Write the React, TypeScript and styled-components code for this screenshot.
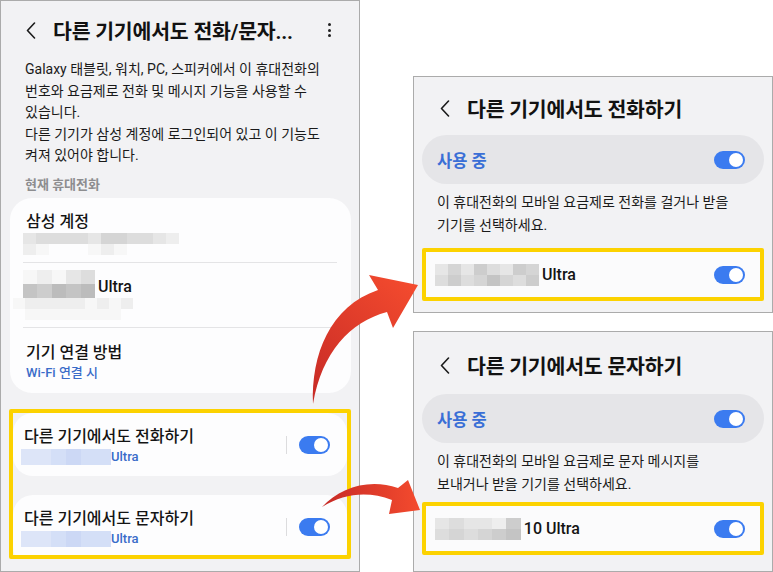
import React from "react";
import styled, { createGlobalStyle } from "styled-components";

const GlobalStyle = createGlobalStyle`
  html, body {
    margin: 0;
    padding: 0;
    background: #ffffff;
  }
  body {
    font-family: "Roboto", "Noto Sans CJK KR", sans-serif;
    color: #121212;
  }
  * {
    box-sizing: border-box;
  }
`;

const Canvas = styled.div`
  position: relative;
  width: 773px;
  height: 572px;
  display: flex;
  justify-content: space-between;
  overflow: hidden;
`;

const Screen = styled.div<{ $height: number }>`
  width: 360px;
  height: ${p => p.$height}px;
  background: #f2f2f4;
  border: 1px solid #ababab;
  padding: 0 8px;
  display: flex;
  flex-direction: column;
  flex: none;
`;

const SideColumn = styled.div`
  display: flex;
  flex-direction: column;
  gap: 18px;
  padding-top: 76px;
`;

const TopBar = styled.div<{ $height: number; $pad: number }>`
  height: ${p => p.$height}px;
  padding: ${p => p.$pad}px 0 0 ${p => p.$pad === 0 ? 17 : 18}px;
  display: flex;
  align-items: center;
  gap: 17px;
  flex: none;
`;

const Title = styled.h1`
  margin: 0;
  flex: 1;
  font-size: 20.5px;
  font-weight: 700;
  letter-spacing: -0.2px;
  white-space: nowrap;
`;

const MoreButton = styled.span`
  display: flex;
  flex-direction: column;
  gap: 2.5px;
  margin-right: 20px;

  &::before, &::after, & > i {
    content: "";
    display: block;
    width: 3px;
    height: 3px;
    border-radius: 50%;
    background: #222;
  }
`;

const Intro = styled.p`
  margin: 0;
  padding: 0 12px 0 16px;
  font-size: 14px;
  line-height: 21.5px;
  color: #1a1a1a;
  white-space: nowrap;
`;

const SectionLabel = styled.div`
  margin: 9px 0 4px;
  padding-left: 16px;
  font-size: 13px;
  line-height: 18px;
  font-weight: 700;
  color: #8d8d8f;
`;

const Card = styled.div`
  background: #fdfdfe;
  border-radius: 22px;
  padding: 0 14px 0 13px;
  margin-left: 1px;
`;

const ListItem = styled.div<{ $divider?: boolean; $top?: number }>`
  height: 65px;
  padding: ${p => p.$top ?? 13}px 0 0 3px;
  display: flex;
  flex-direction: column;
  border-bottom: ${p => p.$divider ? "1px solid #e4e4e6" : "none"};
`;

const ItemTitle = styled.div`
  font-size: 16px;
  line-height: 22px;
  font-weight: 500;
  color: #141414;
  display: flex;
  align-items: flex-end;
  gap: 3px;
  white-space: nowrap;
`;

const ItemSub = styled.div<{ $blue?: boolean }>`
  font-size: 13px;
  line-height: 18px;
  font-weight: 500;
  color: ${p => p.$blue ? "#3a6cc9" : "#555"};
  display: flex;
  align-items: center;
  margin-left: ${p => p.$blue ? 0 : -3}px;
`;

const Highlight = styled.div<{ $height: number }>`
  height: ${p => p.$height}px;
  border: 4px solid #fcd200;
  border-radius: 2px;
  overflow: hidden;
  display: flex;
  flex-direction: column;
  gap: 19px;
  flex: none;
`;

const SwitchCard = styled.div<{ $height: number }>`
  height: ${p => p.$height}px;
  background: #fdfdfe;
  border-radius: 20px;
  padding: 13px 17px 0 11px;
  display: flex;
  align-items: flex-start;
  flex: none;
`;

const SwitchText = styled.div`
  flex: 1;
  display: flex;
  flex-direction: column;
`;

const Rule = styled.span`
  width: 1px;
  height: 18px;
  margin: 10px 12px 0 0;
  background: #dcdcde;
`;

const Toggle = styled.span<{ $drop?: number }>`
  position: relative;
  width: 31px;
  height: 18px;
  margin-top: ${p => p.$drop ?? 0}px;
  border-radius: 9px;
  background: #3b7bf0;
  flex: none;

  &::after {
    content: "";
    position: absolute;
    top: 2px;
    right: 2px;
    width: 14px;
    height: 14px;
    border-radius: 50%;
    background: #ffffff;
  }
`;

const StatusPill = styled.div`
  height: 49px;
  border-radius: 25px;
  background: #e5e5e8;
  padding: 0 19px 0 15px;
  display: flex;
  align-items: center;
  justify-content: space-between;
  flex: none;
`;

const PillLabel = styled.span`
  font-size: 16.5px;
  font-weight: 700;
  color: #3a6fd6;
`;

const Hint = styled.p`
  margin: 7px 0 0;
  padding: 0 15px;
  font-size: 14px;
  line-height: 23px;
  color: #1a1a1a;
  white-space: nowrap;
`;

const DeviceRow = styled.div`
  height: 45px;
  background: #fbfbfc;
  padding: 0 15px 0 9px;
  display: flex;
  align-items: center;
  justify-content: space-between;
`;

const DeviceName = styled.span`
  display: flex;
  align-items: center;
  gap: 3px;
  font-size: 16px;
  font-weight: 500;
  color: #141414;
`;

const MosaicGrid = styled.span<{ $cols: number; $w: number; $h: number; $shift: number }>`
  display: grid;
  grid-template-columns: repeat(${p => p.$cols}, ${p => p.$w}px);
  grid-auto-rows: ${p => p.$h}px;
  margin-left: ${p => p.$shift}px;
  flex: none;
`;

const Cell = styled.span<{ $level: number; $tone: "gray" | "blue" }>`
  display: block;
  background: ${p =>
    p.$level === 0
      ? "transparent"
      : p.$tone === "blue"
        ? `hsl(222, 68%, ${98 - p.$level * 2}%)`
        : `hsl(0, 0%, ${100 - p.$level * 3.3}%)`};
`;

const ArrowLayer = styled.svg`
  position: absolute;
  left: 0;
  top: 0;
  pointer-events: none;
`;

function Mosaic({ rows, w, h, tone = "gray", shift = 0 }: {
  rows: string[];
  w: number;
  h: number;
  tone?: "gray" | "blue";
  shift?: number;
}) {
  return (
    <MosaicGrid $cols={rows[0].length} $w={w} $h={h} $shift={shift}>
      {rows.flatMap((row, i) =>
        [...row].map((c, j) => <Cell key={`${i}-${j}`} $tone={tone} $level={Number(c)} />)
      )}
    </MosaicGrid>
  );
}

function BackIcon() {
  return (
    <svg width="10" height="17" viewBox="0 0 10 17" fill="none">
      <path d="M8.5 1 L1.5 8.5 L8.5 16" stroke="#1a1a1a" strokeWidth="1.6" strokeLinecap="round" strokeLinejoin="round" />
    </svg>
  );
}

function SubScreen({ title, height, top, hintGap, hint, device }: {
  title: string;
  height: number;
  top: number;
  hintGap: number;
  hint: React.ReactNode;
  device: React.ReactNode;
}) {
  return (
    <Screen $height={height}>
      <TopBar $height={top} $pad={4}>
        <BackIcon />
        <Title>{title}</Title>
      </TopBar>
      <StatusPill>
        <PillLabel>사용 중</PillLabel>
        <Toggle />
      </StatusPill>
      <Hint>{hint}</Hint>
      <Highlight $height={53} style={{ marginTop: hintGap }}>
        <DeviceRow>
          {device}
          <Toggle />
        </DeviceRow>
      </Highlight>
    </Screen>
  );
}

export default function App() {
  return (
    <>
      <GlobalStyle />
      <Canvas>
        <Screen $height={572}>
          <TopBar $height={58} $pad={0}>
            <BackIcon />
            <Title>다른 기기에서도 전화/문자...</Title>
            <MoreButton><i /></MoreButton>
          </TopBar>
          <Intro>
            Galaxy 태블릿, 워치, PC, 스피커에서 이 휴대전화의<br />
            번호와 요금제로 전화 및 메시지 기능을 사용할 수<br />
            있습니다.<br />
            다른 기기가 삼성 계정에 로그인되어 있고 이 기능도<br />
            켜져 있어야 합니다.
          </Intro>
          <SectionLabel>현재 휴대전화</SectionLabel>
          <Card>
            <ListItem $divider>
              <ItemTitle>삼성 계정</ItemTitle>
              <ItemSub>
                <Mosaic w={13} h={11} rows={["344443554432", "210001210000"]} />
              </ItemSub>
            </ListItem>
            <ListItem $divider $top={7}>
              <ItemTitle>
                <Mosaic w={14.4} h={14} shift={-3} rows={["12134", "76878"]} />
                Ultra
              </ItemTitle>
              <Mosaic w={12} h={11} shift={-13} rows={["1222221212", "0111111110"]} />
            </ListItem>
            <ListItem $top={14}>
              <ItemTitle>기기 연결 방법</ItemTitle>
              <ItemSub $blue>Wi-Fi 연결 시</ItemSub>
            </ListItem>
          </Card>
          <Highlight $height={150} style={{ marginTop: 16 }}>
            <SwitchCard $height={63}>
              <SwitchText>
                <ItemTitle>다른 기기에서도 전화하기</ItemTitle>
                <ItemSub $blue>
                  <Mosaic w={15} h={16} shift={-3} tone="blue" rows={["334544"]} />
                  Ultra
                </ItemSub>
              </SwitchText>
              <Rule />
              <Toggle $drop={10} />
            </SwitchCard>
            <SwitchCard $height={72}>
              <SwitchText>
                <ItemTitle>다른 기기에서도 문자하기</ItemTitle>
                <ItemSub $blue>
                  <Mosaic w={15} h={16} shift={-3} tone="blue" rows={["334544"]} />
                  Ultra
                </ItemSub>
              </SwitchText>
              <Rule />
              <Toggle $drop={10} />
            </SwitchCard>
          </Highlight>
        </Screen>

        <SideColumn>
          <SubScreen
            title="다른 기기에서도 전화하기"
            height={237}
            top={58}
            hintGap={11}
            hint={<>이 휴대전화의 모바일 요금제로 전화를 걸거나 받을<br />기기를 선택하세요.</>}
            device={
              <DeviceName>
                <Mosaic w={13} h={11} rows={["35364365", "46457546"]} />
                Ultra
              </DeviceName>
            }
          />
          <SubScreen
            title="다른 기기에서도 문자하기"
            height={241}
            top={62}
            hintGap={6}
            hint={<>이 휴대전화의 모바일 요금제로 문자 메시지를<br />보내거나 받을 기기를 선택하세요.</>}
            device={
              <DeviceName>
                <Mosaic w={14.3} h={11} rows={["343326", "454567"]} />
                10 Ultra
              </DeviceName>
            }
          />
        </SideColumn>

        <ArrowLayer width="773" height="572" viewBox="0 0 773 572">
          <defs>
            <linearGradient id="arrowUp" gradientUnits="userSpaceOnUse" x1="313" y1="404" x2="418" y2="285">
              <stop offset="0" stopColor="#c62a26" />
              <stop offset="1" stopColor="#f44b2e" />
            </linearGradient>
            <linearGradient id="arrowSide" gradientUnits="userSpaceOnUse" x1="322" y1="507" x2="420" y2="500">
              <stop offset="0" stopColor="#c62a26" />
              <stop offset="1" stopColor="#f44b2e" />
            </linearGradient>
          </defs>
          <path
            d="M313 404 C311 355 330 306 378 290 L369 275 L418 285 L393 328 L387 312 C350 322 322 352 313 404 Z"
            fill="url(#arrowUp)"
          />
          <path
            d="M322 507 C340 487 370 478 398 488 L408 480 L420 510 L389 514 L392 500 C368 491 345 493 322 507 Z"
            fill="url(#arrowSide)"
          />
        </ArrowLayer>
      </Canvas>
    </>
  );
}
